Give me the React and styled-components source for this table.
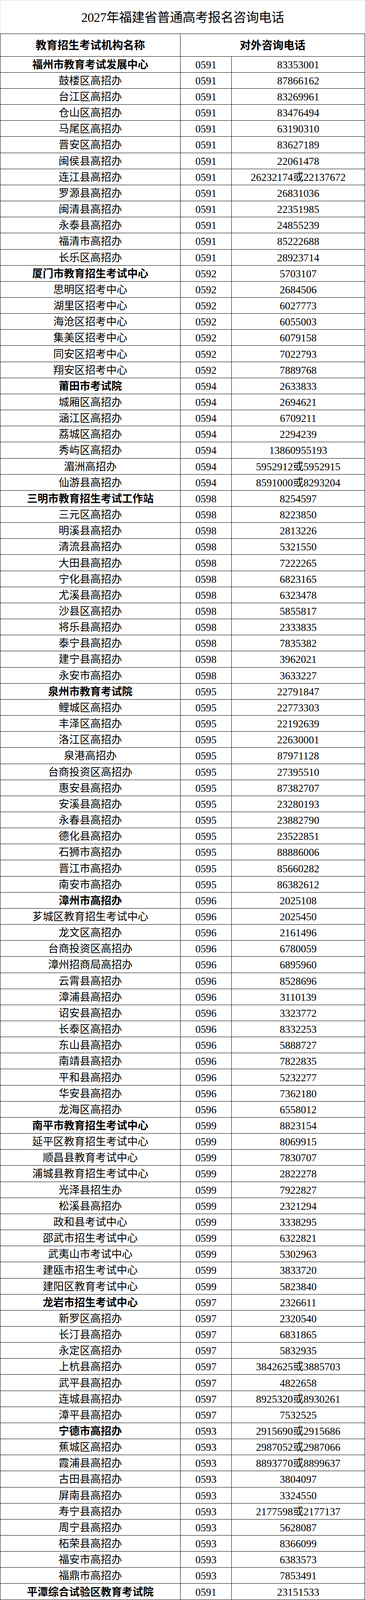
import React from 'react';
import styled, { createGlobalStyle } from 'styled-components';

const K = 4096 / 4876;
const px = (n) => `${(n * K).toFixed(3)}px`;

const GlobalStyle = createGlobalStyle`
  html, body {
    margin: 0;
    padding: 0;
    background: #fff;
  }
  body {
    font-family: "Liberation Serif", "Noto Sans CJK SC", serif;
    color: #000;
  }
  * {
    box-sizing: border-box;
  }
`;

const regions = [
  {
    code: '0591',
    rows: [
      ['福州市教育考试发展中心', '83353001', true],
      ['鼓楼区高招办', '87866162'],
      ['台江区高招办', '83269961'],
      ['仓山区高招办', '83476494'],
      ['马尾区高招办', '63190310'],
      ['晋安区高招办', '83627189'],
      ['闽侯县高招办', '22061478'],
      ['连江县高招办', '26232174或22137672'],
      ['罗源县高招办', '26831036'],
      ['闽清县高招办', '22351985'],
      ['永泰县高招办', '24855239'],
      ['福清市高招办', '85222688'],
      ['长乐区高招办', '28923714'],
    ],
  },
  {
    code: '0592',
    rows: [
      ['厦门市教育招生考试中心', '5703107', true],
      ['思明区招考中心', '2684506'],
      ['湖里区招考中心', '6027773'],
      ['海沧区招考中心', '6055003'],
      ['集美区招考中心', '6079158'],
      ['同安区招考中心', '7022793'],
      ['翔安区招考中心', '7889768'],
    ],
  },
  {
    code: '0594',
    rows: [
      ['莆田市考试院', '2633833', true],
      ['城厢区高招办', '2694621'],
      ['涵江区高招办', '6709211'],
      ['荔城区高招办', '2294239'],
      ['秀屿区高招办', '13860955193'],
      ['湄洲高招办', '5952912或5952915'],
      ['仙游县高招办', '8591000或8293204'],
    ],
  },
  {
    code: '0598',
    rows: [
      ['三明市教育招生考试工作站', '8254597', true],
      ['三元区高招办', '8223850'],
      ['明溪县高招办', '2813226'],
      ['清流县高招办', '5321550'],
      ['大田县高招办', '7222265'],
      ['宁化县高招办', '6823165'],
      ['尤溪县高招办', '6323478'],
      ['沙县区高招办', '5855817'],
      ['将乐县高招办', '2333835'],
      ['泰宁县高招办', '7835382'],
      ['建宁县高招办', '3962021'],
      ['永安市高招办', '3633227'],
    ],
  },
  {
    code: '0595',
    rows: [
      ['泉州市教育考试院', '22791847', true],
      ['鲤城区高招办', '22773303'],
      ['丰泽区高招办', '22192639'],
      ['洛江区高招办', '22630001'],
      ['泉港高招办', '87971128'],
      ['台商投资区高招办', '27395510'],
      ['惠安县高招办', '87382707'],
      ['安溪县高招办', '23280193'],
      ['永春县高招办', '23882790'],
      ['德化县高招办', '23522851'],
      ['石狮市高招办', '88886006'],
      ['晋江市高招办', '85660282'],
      ['南安市高招办', '86382612'],
    ],
  },
  {
    code: '0596',
    rows: [
      ['漳州市高招办', '2025108', true],
      ['芗城区教育招生考试中心', '2025450'],
      ['龙文区高招办', '2161496'],
      ['台商投资区高招办', '6780059'],
      ['漳州招商局高招办', '6895960'],
      ['云霄县高招办', '8528696'],
      ['漳浦县高招办', '3110139'],
      ['诏安县高招办', '3323772'],
      ['长泰区高招办', '8332253'],
      ['东山县高招办', '5888727'],
      ['南靖县高招办', '7822835'],
      ['平和县高招办', '5232277'],
      ['华安县高招办', '7362180'],
      ['龙海区高招办', '6558012'],
    ],
  },
  {
    code: '0599',
    rows: [
      ['南平市教育招生考试中心', '8823154', true],
      ['延平区教育招生考试中心', '8069915'],
      ['顺昌县教育考试中心', '7830707'],
      ['浦城县教育招生考试中心', '2822278'],
      ['光泽县招生办', '7922827'],
      ['松溪县高招办', '2321294'],
      ['政和县考试中心', '3338295'],
      ['邵武市招生考试中心', '6322821'],
      ['武夷山市考试中心', '5302963'],
      ['建瓯市招生考试中心', '3833720'],
      ['建阳区教育考试中心', '5823840'],
    ],
  },
  {
    code: '0597',
    rows: [
      ['龙岩市招生考试中心', '2326611', true],
      ['新罗区高招办', '2320540'],
      ['长汀县高招办', '6831865'],
      ['永定区高招办', '5832935'],
      ['上杭县高招办', '3842625或3885703'],
      ['武平县高招办', '4822658'],
      ['连城县高招办', '8925320或8930261'],
      ['漳平县高招办', '7532525'],
    ],
  },
  {
    code: '0593',
    rows: [
      ['宁德市高招办', '2915690或2915686', true],
      ['蕉城区高招办', '2987052或2987066'],
      ['霞浦县高招办', '8893770或8899637'],
      ['古田县高招办', '3804097'],
      ['屏南县高招办', '3324550'],
      ['寿宁县高招办', '2177598或2177137'],
      ['周宁县高招办', '5628087'],
      ['柘荣县高招办', '8366099'],
      ['福安市高招办', '6383573'],
      ['福鼎市高招办', '7853491'],
    ],
  },
  {
    code: '0591',
    rows: [['平潭综合试验区教育考试院', '23151533', true]],
  },
];

const Page = styled.div`
  width: 934px;
  overflow: hidden;
`;

const Title = styled.h1`
  margin: 0;
  height: ${px(102)};
  border-top: 1px solid #d6d6d6;
  border-left: 1px solid #d6d6d6;
  display: flex;
  align-items: center;
  justify-content: center;
  padding-top: 5px;
  font-size: 33px;
  line-height: 1;
  font-weight: 400;
  letter-spacing: -0.5px;
  white-space: nowrap;
`;

const Sheet = styled.div`
  width: 934px;
  border-top: 1px solid #000;
  border-left: 1px solid #000;
`;

const Row = styled.div`
  display: grid;
  grid-template-columns: 461px 131px 341px;
  height: ${(p) => (p.$head ? px(69) : px(49))};
`;

const Cell = styled.div`
  grid-column: ${(p) => (p.$span ? `span ${p.$span}` : 'auto')};
  display: flex;
  align-items: center;
  justify-content: center;
  padding-top: 3px;
  border-right: 1px solid #000;
  border-bottom: 1px solid #000;
  font-size: ${(p) => (p.$head ? 28 : 27)}px;
  font-weight: ${(p) => (p.$bold ? 700 : 400)};
  line-height: 1;
  white-space: nowrap;
  overflow: hidden;
`;

export default function App() {
  return (
    <Page>
      <GlobalStyle />
      <Title>2027年福建省普通高考报名咨询电话</Title>
      <Sheet>
        <Row $head>
          <Cell $head $bold>教育招生考试机构名称</Cell>
          <Cell $head $bold $span={2}>对外咨询电话</Cell>
        </Row>
        {regions.map((region) =>
          region.rows.map(([name, phone, bold]) => (
            <Row key={name + phone}>
              <Cell $bold={bold}>{name}</Cell>
              <Cell>{region.code}</Cell>
              <Cell>{phone}</Cell>
            </Row>
          ))
        )}
      </Sheet>
    </Page>
  );
}
